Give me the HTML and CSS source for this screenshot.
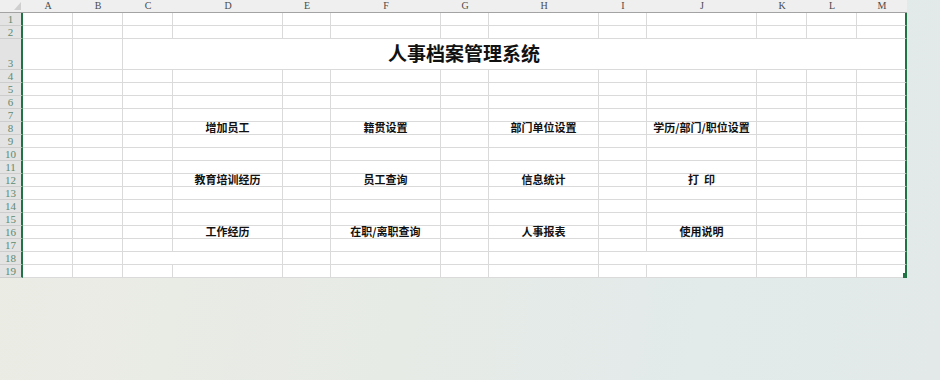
FILE: index.html
```html
<!DOCTYPE html>
<html lang="zh-CN">
<head>
<meta charset="utf-8">
<title>人事档案管理系统</title>
<link rel="stylesheet" href="styles.css">
</head>
<body>
<div class="sheet">
<table class="grid">
<colgroup>
<col class="c-hdr"><col class="c-50"><col class="c-50"><col class="c-50"><col class="c-110"><col class="c-48"><col class="c-110"><col class="c-48"><col class="c-110"><col class="c-48"><col class="c-110"><col class="c-50"><col class="c-50"><col class="c-50">
</colgroup>
<thead>
<tr class="r-colhdr">
<th class="corner"><svg class="tri" width="7" height="8" viewBox="0 0 7 8"><polygon points="7,0 7,8 0,8" fill="#cfcfcf"/></svg></th>
<th>A</th><th>B</th><th>C</th><th>D</th><th>E</th><th>F</th><th>G</th><th>H</th><th>I</th><th>J</th><th>K</th><th>L</th><th>M</th>
</tr>
</thead>
<tbody>
<tr><th class="rn">1</th><td></td><td></td><td></td><td></td><td></td><td></td><td></td><td></td><td></td><td></td><td></td><td></td><td class="last"></td></tr>
<tr><th class="rn">2</th><td></td><td></td><td></td><td></td><td></td><td></td><td></td><td></td><td></td><td></td><td></td><td></td><td class="last"></td></tr>
<tr class="r-title"><th class="rn">3</th><td></td><td></td><td class="title last" colspan="11">人事档案管理系统</td></tr>
<tr><th class="rn">4</th><td></td><td></td><td></td><td></td><td></td><td></td><td></td><td></td><td></td><td></td><td></td><td></td><td class="last"></td></tr>
<tr><th class="rn">5</th><td></td><td></td><td></td><td></td><td></td><td></td><td></td><td></td><td></td><td></td><td></td><td></td><td class="last"></td></tr>
<tr><th class="rn">6</th><td></td><td></td><td></td><td></td><td></td><td></td><td></td><td></td><td></td><td></td><td></td><td></td><td class="last"></td></tr>
<tr><th class="rn">7</th><td></td><td></td><td></td><td></td><td></td><td></td><td></td><td></td><td></td><td></td><td></td><td></td><td class="last"></td></tr>
<tr><th class="rn">8</th><td></td><td></td><td></td><td class="btn">增加员工</td><td></td><td class="btn">籍贯设置</td><td></td><td class="btn">部门单位设置</td><td></td><td class="btn">学历/部门/职位设置</td><td></td><td></td><td class="last"></td></tr>
<tr><th class="rn">9</th><td></td><td></td><td></td><td></td><td></td><td></td><td></td><td></td><td></td><td></td><td></td><td></td><td class="last"></td></tr>
<tr><th class="rn">10</th><td></td><td></td><td></td><td></td><td></td><td></td><td></td><td></td><td></td><td></td><td></td><td></td><td class="last"></td></tr>
<tr><th class="rn">11</th><td></td><td></td><td></td><td></td><td></td><td></td><td></td><td></td><td></td><td></td><td></td><td></td><td class="last"></td></tr>
<tr><th class="rn">12</th><td></td><td></td><td></td><td class="btn">教育培训经历</td><td></td><td class="btn">员工查询</td><td></td><td class="btn">信息统计</td><td></td><td class="btn">打&nbsp;&nbsp;印</td><td></td><td></td><td class="last"></td></tr>
<tr><th class="rn">13</th><td></td><td></td><td></td><td></td><td></td><td></td><td></td><td></td><td></td><td></td><td></td><td></td><td class="last"></td></tr>
<tr><th class="rn">14</th><td></td><td></td><td></td><td></td><td></td><td></td><td></td><td></td><td></td><td></td><td></td><td></td><td class="last"></td></tr>
<tr><th class="rn">15</th><td></td><td></td><td></td><td></td><td></td><td></td><td></td><td></td><td></td><td></td><td></td><td></td><td class="last"></td></tr>
<tr><th class="rn">16</th><td></td><td></td><td></td><td class="btn">工作经历</td><td></td><td class="btn">在职/离职查询</td><td></td><td class="btn">人事报表</td><td></td><td class="btn">使用说明</td><td></td><td></td><td class="last"></td></tr>
<tr><th class="rn">17</th><td></td><td></td><td></td><td></td><td></td><td></td><td></td><td></td><td></td><td></td><td></td><td></td><td class="last"></td></tr>
<tr><th class="rn">18</th><td></td><td></td><td colspan="2"></td><td></td><td></td><td></td><td></td><td colspan="2"></td><td></td><td></td><td class="last"></td></tr>
<tr><th class="rn">19</th><td></td><td></td><td></td><td></td><td></td><td></td><td></td><td></td><td></td><td></td><td></td><td></td><td class="last"></td></tr>
</tbody>
</table>
<div class="handle"></div>
</div>
</body>
</html>
```
FILE: styles.css
```css
html, body {
  margin: 0;
  padding: 0;
}
body {
  width: 940px;
  height: 380px;
  overflow: hidden;
  background: linear-gradient(100deg, #ebece4 0%, #e7ebe6 45%, #e2eaea 75%, #e3e9e9 100%);
  font-family: "Noto Sans CJK SC", "Liberation Sans", sans-serif;
}
.sheet {
  position: relative;
  display: inline-block;
  vertical-align: top;
}
.grid {
  table-layout: fixed;
  border-collapse: separate;
  border-spacing: 0;
  width: 907px;
  background: #ffffff;
}
.c-hdr { width: 23px; }
.c-50 { width: 50px; }
.c-48 { width: 48px; }
.c-110 { width: 110px; }

.grid th, .grid td {
  padding: 0;
  box-sizing: border-box;
  white-space: nowrap;
}
.grid tr { height: 13px; }
.grid tr.r-title { height: 31px; }

.grid td {
  border-right: 1px solid #dadada;
  border-bottom: 1px solid #dadada;
  vertical-align: middle;
  text-align: center;
  font-size: 11px;
  line-height: 11px;
}
.grid td.last {
  border-right: 2px solid #217346;
}

.r-colhdr th {
  background: #efefef;
  border-bottom: 1px solid #a3a3a3;
  font-family: "Liberation Serif", "DejaVu Serif", serif;
  font-weight: normal;
  font-size: 10px;
  line-height: 12px;
  color: #4a4a4a;
  text-align: center;
  vertical-align: top;
}
.r-colhdr th.corner {
  text-align: right;
  padding-right: 2px;
  vertical-align: top;
}
.tri {
  display: block;
  margin: 2px 0 0 auto;
}

.grid th.rn {
  background: #e3e3e3;
  border-right: 2px solid #217346;
  border-bottom: 1px solid #cdcdcd;
  font-family: "Liberation Serif", "DejaVu Serif", serif;
  font-weight: normal;
  font-size: 11px;
  line-height: 11px;
  color: #5f8a70;
  text-align: center;
  vertical-align: bottom;
}

.grid td.btn {
  font-weight: bold;
  color: #111111;
  padding-bottom: 1px;
}
.grid td.title {
  font-size: 19px;
  line-height: 22px;
  font-weight: bold;
  color: #111111;
  text-align: center;
  padding-right: 100px;
  padding-bottom: 3px;
}

.handle {
  position: absolute;
  right: 0;
  bottom: 0;
  width: 4px;
  height: 5px;
  background: #217346;
}
```
